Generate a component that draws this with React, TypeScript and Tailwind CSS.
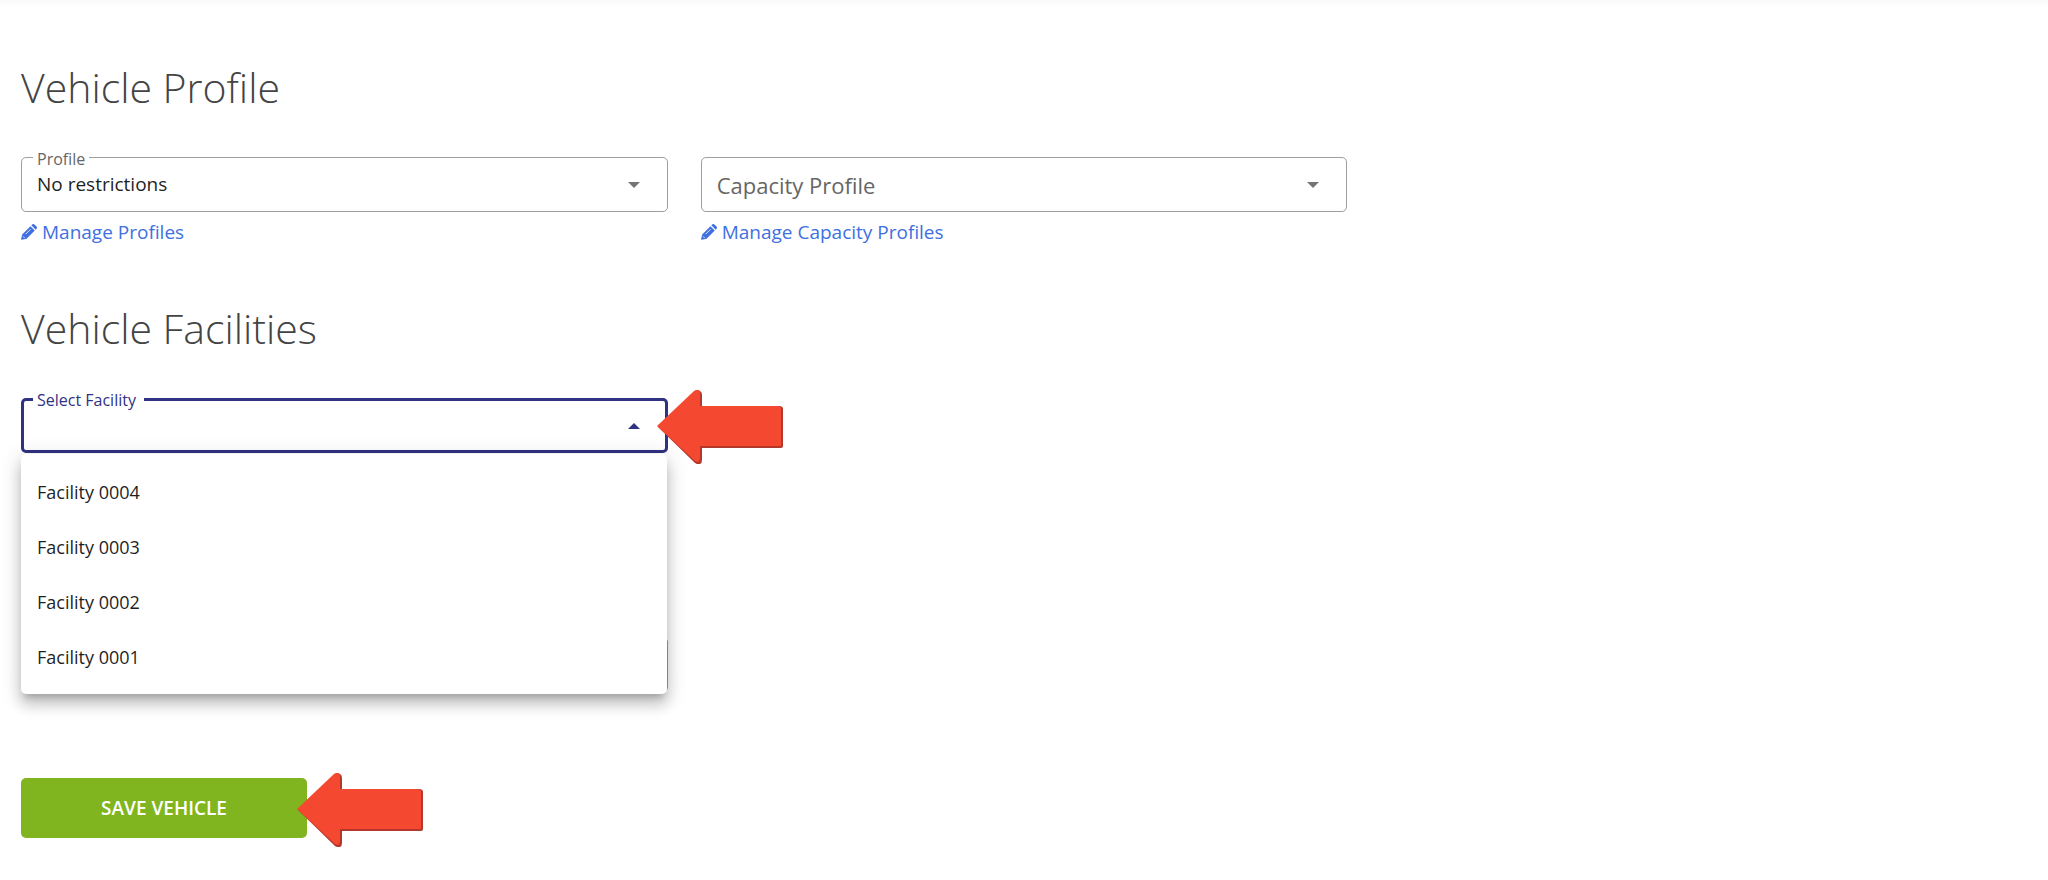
import React, { useState } from "react";
import clsx from "clsx";

const facilities = ["Facility 0004", "Facility 0003", "Facility 0002", "Facility 0001"];

const Pencil = () => (
  <svg viewBox="0 0 16 16" className="h-4 w-4 shrink-0" fill="currentColor" aria-hidden="true">
    <path d="M1.2 10.4 9.4 2.2l4.4 4.4-8.2 8.2L.8 15.8a.6.6 0 0 1-.7-.7zM10.3 1.3l.9-.8a1.6 1.6 0 0 1 2.2 0l2.1 2.1a1.6 1.6 0 0 1 0 2.2l-.8.9z" />
    <path d="M4.6 10.2 9.6 5.2M2 12.3l1.7 1.7" stroke="#fff" strokeWidth="0.8" fill="none" />
  </svg>
);

const Caret = ({ up = false }: { up?: boolean }) => (
  <svg
    viewBox="0 0 12 6"
    className={clsx("pointer-events-none -ml-10 mr-[27px] h-[6px] w-[12px] shrink-0", up ? "text-[#303284]" : "text-[#757575]")}
    fill="currentColor"
    aria-hidden="true"
  >
    <path d={up ? "M0 6 6 0l6 6z" : "M0 0h12L6 6z"} />
  </svg>
);

const Arrow = ({ className }: { className?: string }) => (
  <svg viewBox="0 0 126 74" className={clsx("pointer-events-none absolute z-20 h-[74px] w-[126px]", className)} aria-hidden="true">
    <path
      d="M1 37 38 2q3-2 5-1 2 1 2 4v11h77q4 0 4 3v37q0 2-2 2H45v12q0 3-2 4-2 1-5-1z"
      fill="#b3372a"
    />
    <path
      d="M0 36 37 1q3-2 5-1 1 1 1 4v12h78q3 0 3 3v36q0 1-1 1H43v12q0 3-2 4-1 0-3-1z"
      fill="#f44830"
    />
  </svg>
);

type FieldProps = {
  id: string;
  label: string;
  value: string;
  options: string[];
  open?: boolean;
  onChange: (value: string) => void;
};

const Field = ({ id, label, value, options, open = false, onChange }: FieldProps) => {
  const floating = open || value !== "";

  return (
    <div className="relative flex items-center">
      <select
        id={id}
        value={value}
        onChange={(e) => onChange(e.target.value)}
        className={clsx(
          "h-[55px] w-full appearance-none rounded-[5px] bg-white text-[19px] text-[#1f1f1f] outline-none",
          open ? "border-[3px] border-[#303284] px-[13px]" : "border border-[#9e9e9e] px-[15px]"
        )}
      >
        <option value="" />
        {options.map((option) => (
          <option key={option}>{option}</option>
        ))}
      </select>
      <label
        htmlFor={id}
        className={clsx(
          "pointer-events-none absolute",
          floating ? "-top-2 left-3 bg-white px-1 text-base leading-5" : "left-4 text-[22px] leading-7",
          open ? "pr-2 text-[#303284]" : "text-[#666666]"
        )}
      >
        {label}
      </label>
      <Caret up={open} />
    </div>
  );
};

const ManageLink = ({ children }: { children: React.ReactNode }) => (
  <a href="#manage" className="mt-[6px] flex items-center gap-[5px] text-[19px] leading-7 text-[#4070e0]">
    <Pencil />
    {children}
  </a>
);

const App = () => {
  const [profile, setProfile] = useState("No restrictions");
  const [capacity, setCapacity] = useState("");
  const [facility, setFacility] = useState("");
  const [depot, setDepot] = useState("");

  return (
    <div className="min-h-screen bg-white font-['Open_Sans',sans-serif]">
      <div className="h-2 bg-linear-to-b from-[#f9f9f9] to-white" />

      <form className="px-[21px] pb-10" onSubmit={(e) => e.preventDefault()}>
        <section className="pt-[51px]">
          <h2 className="text-[41px] font-light leading-[56px] text-[#444444]">Vehicle Profile</h2>
          <div className="mt-[42px] grid grid-cols-3 gap-[33px]">
            <div>
              <Field id="profile" label="Profile" value={profile} options={["No restrictions"]} onChange={setProfile} />
              <ManageLink>Manage Profiles</ManageLink>
            </div>
            <div>
              <Field id="capacity" label="Capacity Profile" value={capacity} options={[]} onChange={setCapacity} />
              <ManageLink>Manage Capacity Profiles</ManageLink>
            </div>
          </div>
        </section>

        <section className="pt-[54px]">
          <h2 className="text-[41px] font-light leading-[56px] text-[#444444]">Vehicle Facilities</h2>
          <div className="mt-[42px] grid grid-cols-3 gap-[33px]">
            <div>
              <div className="relative">
                <Field id="facility" label="Select Facility" value={facility} options={facilities} open onChange={setFacility} />
                <ul
                  role="listbox"
                  aria-label="Select Facility"
                  className="absolute left-0 right-px top-full z-10 mt-px rounded-[5px] bg-white py-[10px] shadow-[0_7px_7px_-4px_rgba(0,0,0,0.2),0_11px_13px_1px_rgba(0,0,0,0.14),0_4px_19px_3px_rgba(0,0,0,0.12)]"
                >
                  {facilities.map((name) => (
                    <li
                      key={name}
                      role="option"
                      aria-selected={facility === name}
                      onClick={() => setFacility(name)}
                      className="flex h-[55px] cursor-pointer items-center px-4 text-lg text-[#1f1f1f]"
                    >
                      {name}
                    </li>
                  ))}
                </ul>
                <Arrow className="-top-2 left-full -ml-[11px]" />
              </div>
              {/* next field, covered while the list is open */}
              <select
                aria-label="Depot"
                value={depot}
                onChange={(e) => setDepot(e.target.value)}
                className="mt-[184px] block h-[55px] w-full appearance-none rounded-[5px] border border-[#9e9e9e] px-4"
              >
                <option value="" />
              </select>
            </div>
          </div>
        </section>

        <div className="relative mt-[86px] w-fit">
          <button
            type="submit"
            className="h-[60px] w-[286px] rounded-[5px] bg-[#80b520] text-[19px] font-semibold text-white"
          >
            SAVE VEHICLE
          </button>
          <Arrow className="-top-[5px] left-full -ml-[10px]" />
        </div>
      </form>
    </div>
  );
};

export default App;
